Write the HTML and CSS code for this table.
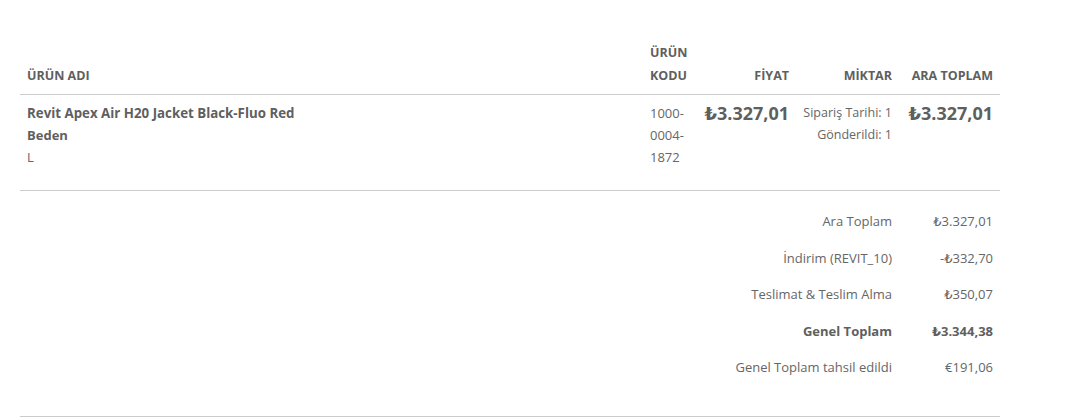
FILE: index.html
```html
<!DOCTYPE html>
<html lang="tr">
<head>
    <meta charset="UTF-8">
    <meta name="viewport" content="width=device-width, initial-scale=1.0">
    <title>Sipariş Detayı</title>
    <link rel="stylesheet" href="styles.css">
</head>
<body>
    <div class="order-items">
        <table class="items-table">
            <colgroup>
                <col class="col-name">
                <col class="col-sku">
                <col class="col-price">
                <col class="col-qty">
                <col class="col-subtotal">
            </colgroup>
            <thead>
                <tr>
                    <th>Ürün Adı</th>
                    <th>Ürün Kodu</th>
                    <th class="right">Fiyat</th>
                    <th class="right">Miktar</th>
                    <th class="right">Ara Toplam</th>
                </tr>
            </thead>
            <tbody>
                <tr class="item-row">
                    <td>
                        <div class="product-name">Revit Apex Air H20 Jacket Black-Fluo Red</div>
                        <div class="option-label">Beden</div>
                        <div class="option-value">L</div>
                    </td>
                    <td class="sku">1000-0004-1872</td>
                    <td class="right price">₺3.327,01</td>
                    <td class="right qty">
                        <div>Sipariş Tarihi: 1</div>
                        <div>Gönderildi: 1</div>
                    </td>
                    <td class="right price">₺3.327,01</td>
                </tr>
            </tbody>
            <tfoot>
                <tr class="first">
                    <td colspan="4" class="right">Ara Toplam</td>
                    <td class="right">₺3.327,01</td>
                </tr>
                <tr>
                    <td colspan="4" class="right">İndirim (REVIT_10)</td>
                    <td class="right">-₺332,70</td>
                </tr>
                <tr>
                    <td colspan="4" class="right">Teslimat &amp; Teslim Alma</td>
                    <td class="right">₺350,07</td>
                </tr>
                <tr class="grand">
                    <td colspan="4" class="right">Genel Toplam</td>
                    <td class="right">₺3.344,38</td>
                </tr>
                <tr>
                    <td colspan="4" class="right">Genel Toplam tahsil edildi</td>
                    <td class="right">€191,06</td>
                </tr>
            </tfoot>
        </table>
    </div>
</body>
</html>
```

FILE: styles.css
```css
body {
    font-family: "Open Sans", "DejaVu Sans", sans-serif;
    font-size: 13px;
    color: #666;
    background-color: #fff;
    margin: 0;
    padding: 33px 0 0 20px;
}
.order-items {
    width: 980px;
    padding-bottom: 30px;
    border-bottom: 1px solid #ccc;
}
.items-table {
    width: 980px;
    border-collapse: collapse;
    table-layout: fixed;
    line-height: 22px;
}
.col-name { width: 623px; }
.col-sku { width: 54px; }
.col-price { width: 99px; }
.col-qty { width: 103px; }
.col-subtotal { width: 101px; }
th {
    font-size: 12.5px;
    font-weight: 700;
    line-height: 23px;
    text-transform: uppercase;
    text-align: left;
    vertical-align: bottom;
    padding: 8px 7px 7px;
    border-bottom: 1px solid #ccc;
    color: #5f5f5f;
}
td {
    padding: 7px 7px;
    vertical-align: top;
}
.right {
    text-align: right;
}
.item-row td {
    padding-bottom: 22px;
    border-bottom: 1px solid #ccc;
}
.product-name,
.option-label {
    font-weight: 700;
    color: #5f5f5f;
}
.product-name {
    font-size: 13.3px;
}
.qty {
    font-size: 12.5px;
    white-space: nowrap;
}
.price {
    font-size: 18px;
    font-weight: 700;
    color: #5f5f5f;
}
tfoot td {
    padding: 7px 7px 7.5px;
}
tfoot tr.first td {
    padding-top: 19px;
}
tfoot tr.grand td {
    font-weight: 700;
    color: #5f5f5f;
}
```
